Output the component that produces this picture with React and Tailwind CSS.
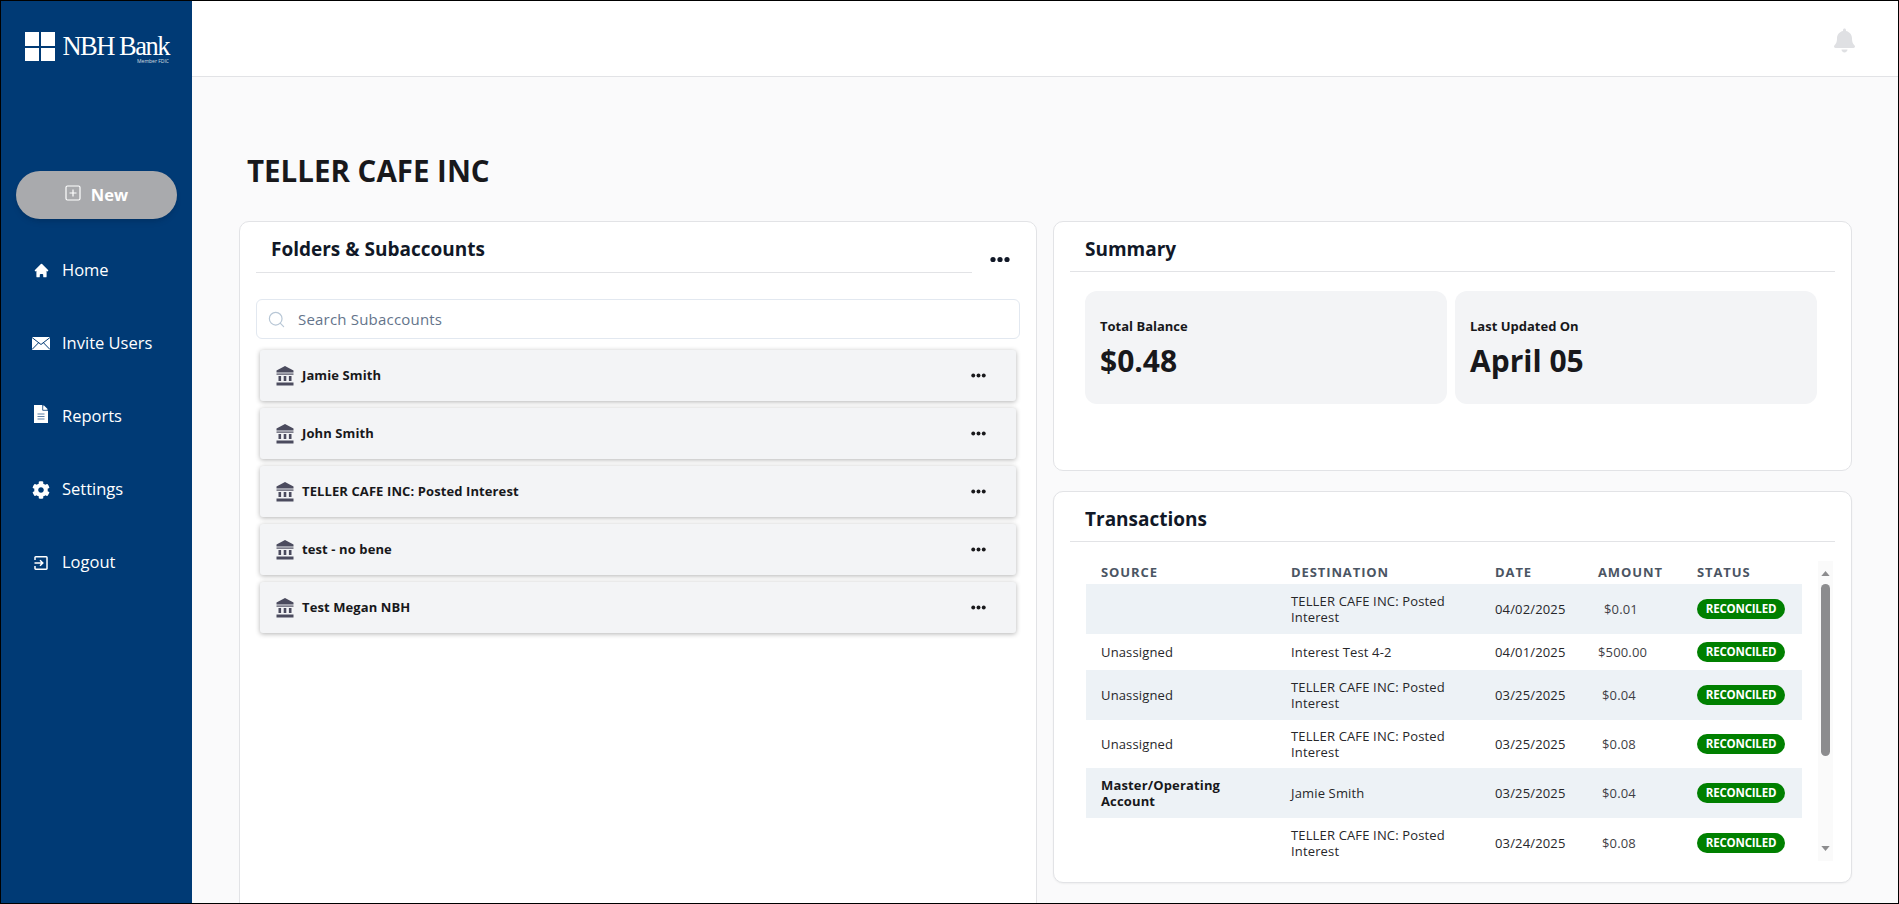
import { Search } from 'lucide-react';
import { FaBell, FaCog } from 'react-icons/fa';
import { HiHome } from 'react-icons/hi';

const font = { fontFamily: '"Open Sans", "Noto Sans", sans-serif' };

function Dots({ className }) {
  return (
    <svg viewBox="0 0 20 6" className={className} fill="currentColor">
      <circle cx="3" cy="3" r="2.6" />
      <circle cx="10" cy="3" r="2.6" />
      <circle cx="17" cy="3" r="2.6" />
    </svg>
  );
}

function BankIcon() {
  return (
    <svg viewBox="0 0 18 20" className="w-[18px] h-5 text-[#4b4b5e]" fill="currentColor">
      <path d="M9 0 L17.5 4.5 V6.5 H0.5 V4.5 Z" />
      <rect x="0.5" y="7.5" width="17" height="1.2" />
      <rect x="2.5" y="10" width="2.6" height="5" />
      <rect x="7.7" y="10" width="2.6" height="5" />
      <rect x="12.9" y="10" width="2.6" height="5" />
      <rect x="0.5" y="16.5" width="17" height="3" />
    </svg>
  );
}

function MailIcon() {
  return (
    <svg viewBox="0 0 18 13" className="w-[18px] h-[13px]">
      <rect width="18" height="13" fill="#fff" />
      <path d="M0 0.5 L9 7.5 L18 0.5 M0 12.5 L6.5 5.8 M18 12.5 L11.5 5.8" stroke="#003a75" strokeWidth="1" fill="none" />
    </svg>
  );
}

function ReportIcon() {
  return (
    <svg viewBox="0 0 14 18" className="w-[14px] h-[18px] -mt-[6px]">
      <path d="M0 0 H8.5 L14 5.5 V18 H0 Z" fill="#fff" />
      <path d="M9.5 0 L14 4.5 H9.5 Z" fill="#fff" />
      <path d="M8.7 0 V5.3 H14" stroke="#003a75" strokeWidth="0.8" fill="none" />
      <path d="M3.5 9 H10.5 M3.5 11.5 H10.5 M3.5 14 H10.5" stroke="#5d80a8" strokeWidth="1.2" />
    </svg>
  );
}

function LogoutIcon() {
  return (
    <svg viewBox="0 0 14 14" className="w-[14px] h-[14px]" fill="none" stroke="#fff" strokeWidth="1.5">
      <path d="M1 4 V1.5 a0.7 0.7 0 0 1 0.7 -0.7 H12.3 a0.7 0.7 0 0 1 0.7 0.7 V12.5 a0.7 0.7 0 0 1 -0.7 0.7 H1.7 a0.7 0.7 0 0 1 -0.7 -0.7 V10" />
      <path d="M0.5 7 H8.5 M6 4.2 L8.8 7 L6 9.8" />
    </svg>
  );
}

function Logo() {
  return (
    <div className="flex items-start gap-[6px] ml-[24px]">
      <div className="grid grid-cols-2 gap-[2px] w-[30px] h-[29px] shrink-0">
        <div className="bg-white" />
        <div className="bg-white" />
        <div className="bg-white" />
        <div className="bg-white" />
      </div>
      <div className="flex flex-col items-end w-[108px] mt-[1px]">
        <span className="text-white text-[26.5px] leading-[26px] tracking-[-1.5px] whitespace-nowrap" style={{ fontFamily: '"Liberation Serif", serif' }}>NBH Bank</span>
        <span className="text-white text-[5px] leading-[5px] opacity-80 whitespace-nowrap">Member FDIC</span>
      </div>
    </div>
  );
}

const navItems = [
  { label: 'Home', icon: <HiHome className="w-[17px] h-[17px] text-white" /> },
  { label: 'Invite Users', icon: <MailIcon /> },
  { label: 'Reports', icon: <ReportIcon /> },
  { label: 'Settings', icon: <FaCog className="w-[18px] h-[18px] text-white" /> },
  { label: 'Logout', icon: <LogoutIcon /> },
];

function Sidebar() {
  return (
    <aside className="w-[191px] shrink-0 bg-[#003a75] flex flex-col pt-[31px]">
      <Logo />
      <button className="mt-[107px] ml-[15px] w-[161px] h-[48px] rounded-full bg-[#a9aaad] shadow-md flex items-center justify-center gap-[10px] text-white font-bold text-[16.5px]">
        <svg viewBox="0 0 16 16" className="w-4 h-4 -mt-1" fill="none" stroke="#fff" strokeWidth="1.2">
          <rect x="1" y="1" width="14" height="14" rx="1.5" />
          <path d="M8 4.5 V11.5 M4.5 8 H11.5" />
        </svg>
        New
      </button>
      <nav className="mt-[15px] flex flex-col">
        {navItems.map(item => (
          <div key={item.label} className="h-[73px] flex items-center text-white text-[16.5px]">
            <div className="w-[61px] shrink-0 flex justify-center pl-[19px]">{item.icon}</div>
            <span>{item.label}</span>
          </div>
        ))}
      </nav>
    </aside>
  );
}

const subaccounts = ['Jamie Smith', 'John Smith', 'TELLER CAFE INC: Posted Interest', 'test - no bene', 'Test Megan NBH'];

function FoldersCard() {
  return (
    <section className="h-[720px] bg-white border border-[#e2e3e6] rounded-[10px] px-4 shrink-0">
      <div className="flex items-start">
        <div className="w-[716px] h-[51px] border-b border-[#e2e3e6] flex items-center pl-[15px] pt-[5px]">
          <h2 className="text-[19px] font-bold text-[#111827]">Folders &amp; Subaccounts</h2>
        </div>
        <Dots className="w-[20px] h-[7px] ml-[18px] mt-[34px] text-[#111827]" />
      </div>
      <div className="mt-[26px] h-[40px] border border-[#e2e8f0] rounded-[6px] flex items-center pl-[10px] gap-3">
        <Search className="w-[19px] h-[19px] text-[#b8c7d6]" strokeWidth={1.5} />
        <span className="text-[#64748b] text-[15px] tracking-[0.2px]">Search Subaccounts</span>
      </div>
      <div className="mt-[11px] mx-[4px] flex flex-col gap-[7px]">
        {subaccounts.map(name => (
          <div key={name} className="h-[51px] bg-[#f3f4f6] rounded-[3px] shadow-[0_1px_5px_rgba(0,0,0,0.3)] flex items-center pl-4 pr-[30px]">
            <BankIcon />
            <span className="ml-[8px] text-[13px] font-bold text-[#18181b] tracking-[0.1px]">{name}</span>
            <Dots className="ml-auto w-[15px] h-[5px] text-[#18181b]" />
          </div>
        ))}
      </div>
    </section>
  );
}

function SummaryCard() {
  return (
    <section className="h-[250px] bg-white border border-[#e2e3e6] rounded-[10px] px-4">
      <div className="h-[50px] border-b border-[#e2e3e6] flex items-center pl-[15px] pt-[6px]">
        <h2 className="text-[19px] font-bold text-[#111827]">Summary</h2>
      </div>
      <div className="mt-[19px] ml-[15px] flex gap-2">
        <Stat label="Total Balance" value="$0.48" />
        <Stat label="Last Updated On" value="April 05" />
      </div>
    </section>
  );
}

function Stat({ label, value }) {
  return (
    <div className="w-[362px] h-[113px] bg-[#f3f4f6] rounded-[12px] pl-[15px] pt-[26px]">
      <div className="text-[13px] leading-[18px] font-bold text-[#18181b]">{label}</div>
      <div className="mt-[7px] text-[30px] leading-[38px] font-bold text-[#18181b]">{value}</div>
    </div>
  );
}

const POSTED = 'TELLER CAFE INC: Posted Interest';
const rows = [
  { source: '', dest: POSTED, date: '04/02/2025', amount: '$0.01', h: 'h-[50px]', pad: 'pl-[22px]', alt: true },
  { source: 'Unassigned', dest: 'Interest Test 4-2', date: '04/01/2025', amount: '$500.00', h: 'h-[36px]', pad: 'pl-4' },
  { source: 'Unassigned', dest: POSTED, date: '03/25/2025', amount: '$0.04', h: 'h-[50px]', pad: 'pl-[20px]', alt: true },
  { source: 'Unassigned', dest: POSTED, date: '03/25/2025', amount: '$0.08', h: 'h-[48px]', pad: 'pl-[20px]' },
  { source: 'Master/Operating Account', bold: true, dest: 'Jamie Smith', date: '03/25/2025', amount: '$0.04', h: 'h-[50px]', pad: 'pl-[20px]', alt: true },
  { source: '', dest: POSTED, date: '03/24/2025', amount: '$0.08', h: 'h-[50px]', pad: 'pl-[20px]' },
];

function TransactionsCard() {
  return (
    <section className="h-[392px] bg-white border border-[#e2e3e6] rounded-[10px] px-4 shadow-[0_1px_2px_rgba(0,0,0,0.05)]">
      <div className="h-[50px] border-b border-[#e2e3e6] flex items-center pl-[15px] pt-[6px]">
        <h2 className="text-[19px] font-bold text-[#111827]">Transactions</h2>
      </div>
      <div className="mt-[19px] flex h-[300px]">
        <div className="w-[716px] ml-[16px] overflow-hidden">
          <div className="grid grid-cols-[190px_203px_103px_99px_121px] h-[23px] items-center text-[13px] font-bold text-[#4b5563] tracking-[0.9px]">
            <span className="pl-[15px]">SOURCE</span>
            <span className="pl-[15px]">DESTINATION</span>
            <span className="pl-4">DATE</span>
            <span className="pl-4">AMOUNT</span>
            <span className="pl-4">STATUS</span>
          </div>
          {rows.map((r, i) => (
            <div key={i} className={`grid grid-cols-[190px_203px_103px_99px_121px] items-center text-[13px] leading-[16px] text-[#27272a] tracking-[0.15px] ${r.h} ${r.alt ? 'bg-[#edf2f6]' : 'bg-white'}`}>
              <span className={`pl-[15px] pr-6 ${r.bold ? 'font-bold text-[#18181b]' : ''}`}>{r.source}</span>
              <span className="pl-[15px] pr-8">{r.dest}</span>
              <span className="pl-4">{r.date}</span>
              <span className={`${r.pad} text-[#3f3f46]`}>{r.amount}</span>
              <span className="pl-4">
                <span className="inline-flex items-center justify-center w-[88px] h-5 rounded-full bg-[#008000] text-white text-[11.5px] font-bold tracking-[-0.2px]">RECONCILED</span>
              </span>
            </div>
          ))}
        </div>
        <div className="ml-[16px] w-[15px] bg-[#fafafa] flex flex-col items-center">
          <svg viewBox="0 0 10 6" className="mt-[10px] w-[9px] h-[5px] text-[#8c8c8e]" fill="currentColor"><path d="M5 0 L10 6 H0 Z" /></svg>
          <div className="mt-[8px] w-[9px] h-[172px] rounded-full bg-[#8c8c8e]" />
          <svg viewBox="0 0 10 6" className="mt-auto mb-[10px] w-[9px] h-[5px] text-[#8c8c8e]" fill="currentColor"><path d="M5 6 L10 0 H0 Z" /></svg>
        </div>
      </div>
    </section>
  );
}

export default function App() {
  return (
    <div className="w-[1899px] h-[904px] overflow-hidden flex border border-black bg-[#fafafb]" style={font}>
      <Sidebar />
      <main className="flex-1 min-w-0 flex flex-col">
        <header className="h-[76px] shrink-0 bg-white border-b border-[#e2e3e6] flex items-center justify-end pr-[43px]">
          <FaBell className="w-[21px] h-[25px] mt-[3px] text-[#dfe0e3]" />
        </header>
        <h1 className="mt-[75px] ml-[55px] text-[29.5px] leading-[38px] font-bold text-[#18181b]">TELLER CAFE INC</h1>
        <div className="mt-[31px] ml-[47px] flex gap-[16px]">
          <div className="w-[798px] shrink-0"><FoldersCard /></div>
          <div className="w-[799px] shrink-0 flex flex-col gap-[20px]">
            <SummaryCard />
            <TransactionsCard />
          </div>
        </div>
      </main>
    </div>
  );
}
